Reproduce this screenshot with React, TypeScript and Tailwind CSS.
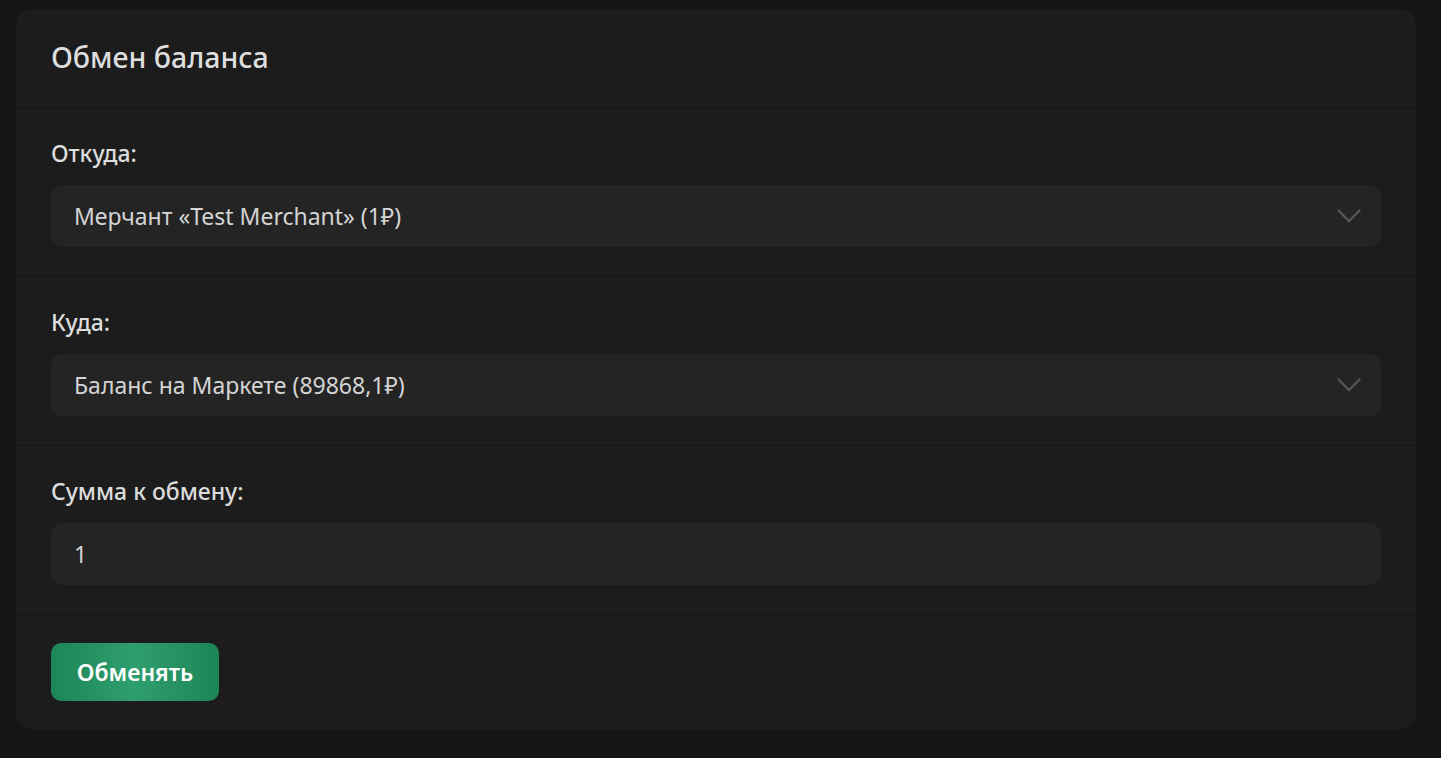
import { useState } from "react";

const FROM_OPTIONS = ["Мерчант «Test Merchant» (1₽)"];
const TO_OPTIONS = ["Баланс на Маркете (89868,1₽)"];

function Chevron() {
  return (
    <svg width="24" height="14" viewBox="0 0 24 14" fill="none" className="shrink-0">
      <path d="M1.5 1.5 L12 12 L22.5 1.5" stroke="#585858" strokeWidth="2.2" strokeLinecap="round" strokeLinejoin="round" />
    </svg>
  );
}

function SelectField({ label, options }: { label: string; options: string[] }) {
  const [value, setValue] = useState(options[0]);
  return (
    <div className="border-b border-[#141414] px-[35px] pt-[30px] pb-[29px]">
      <label className="block text-[23px] leading-[30px] font-medium text-[#dcdcdc]">{label}</label>
      <div className="relative mt-[17px] h-[62px] rounded-[12px] bg-[#242424]">
        <select
          value={value}
          onChange={(e) => setValue(e.target.value)}
          className="h-full w-full appearance-none bg-transparent pl-[23px] pr-[60px] text-[23px] text-[#d4d4d4] outline-none"
        >
          {options.map((o) => (
            <option key={o} value={o} className="bg-[#242424]">
              {o}
            </option>
          ))}
        </select>
        <div className="pointer-events-none absolute right-[20px] top-1/2 -translate-y-1/2">
          <Chevron />
        </div>
      </div>
    </div>
  );
}

export default function App() {
  const [amount, setAmount] = useState("1");

  return (
    <div className="min-h-[758px] bg-[#151515] pl-[16px] pr-[25px] pt-[9px] pb-[29px] font-['Noto_Sans',sans-serif]">
      <div className="overflow-hidden rounded-[16px] bg-[#1c1c1c]">
        {/* Header */}
        <div className="flex h-[99px] items-center border-b border-[#141414] px-[35px] pb-[2px]">
          <h1 className="text-[28.5px] font-medium text-[#dedede]">Обмен баланса</h1>
        </div>

        <SelectField label="Откуда:" options={FROM_OPTIONS} />
        <SelectField label="Куда:" options={TO_OPTIONS} />

        {/* Amount */}
        <div className="border-b border-[#141414] px-[35px] pt-[30px] pb-[29px]">
          <label className="block text-[23px] leading-[30px] font-medium text-[#dcdcdc]">Сумма к обмену:</label>
          <input
            value={amount}
            onChange={(e) => setAmount(e.target.value)}
            className="mt-[17px] block h-[62px] w-full rounded-[12px] bg-[#242424] px-[23px] text-[23px] text-[#d4d4d4] outline-none"
          />
        </div>

        {/* Footer */}
        <div className="px-[35px] pt-[28px] pb-[28px]">
          <button className="h-[58px] w-[168px] rounded-[10px] bg-[linear-gradient(90deg,#1d8656_0%,#2f9e6e_50%,#1d8656_100%)] text-[23px] font-semibold text-white">
            Обменять
          </button>
        </div>
      </div>
    </div>
  );
}
